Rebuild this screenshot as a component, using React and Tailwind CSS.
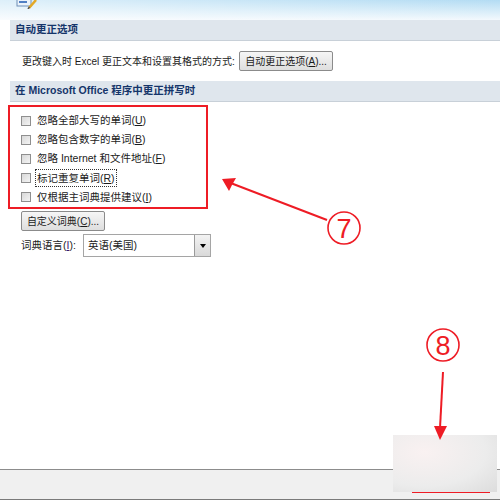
import { useState } from 'react'

const spellOptions = [
  { label: '忽略全部大写的单词', key: 'U' },
  { label: '忽略包含数字的单词', key: 'B' },
  { label: '忽略 Internet 和文件地址', key: 'F' },
  { label: '标记重复单词', key: 'R', focused: true },
  { label: '仅根据主词典提供建议', key: 'I' },
]

function Checkbox() {
  return (
    <span className="w-[10px] h-[10px] border border-[#8f8f8f] bg-[linear-gradient(135deg,#d8d8d8,#f4f4f4)] shrink-0" />
  )
}

function SectionHeader({ children }) {
  return (
    <div className="h-[21px] bg-[#dfe6ed] border-b border-[#c8d0d8] flex items-center pl-[5px] text-[10.5px] font-bold text-[#15356a] whitespace-nowrap">
      {children}
    </div>
  )
}

function WinButton({ children, className = '' }) {
  return (
    <button className={`h-[20px] border border-[#8b8b8b] rounded-[2px] bg-[linear-gradient(to_bottom,#f6f6f6,#dedede)] text-[10px] text-[#1b1b1b] flex items-center justify-center whitespace-nowrap shrink-0 ${className}`}>
      {children}
    </button>
  )
}

function Annotations() {
  return (
    <svg className="absolute inset-0 pointer-events-none" width="500" height="500">
      <line x1="327" y1="220" x2="228" y2="182" stroke="#ee1c25" strokeWidth="2" />
      <path d="M222,179 L236,178 L232,185 L229,191 Z" fill="#ee1c25" />
      <circle cx="344" cy="228" r="16" fill="none" stroke="#ee1c25" strokeWidth="1.6" />
      <text x="344" y="238" textAnchor="middle" fontSize="27" fill="#ee1c25" fontFamily="Liberation Sans, sans-serif">7</text>

      <circle cx="443" cy="345" r="16" fill="none" stroke="#ee1c25" strokeWidth="1.6" />
      <text x="443" y="355" textAnchor="middle" fontSize="27" fill="#ee1c25" fontFamily="Liberation Sans, sans-serif">8</text>
      <line x1="443" y1="372" x2="440" y2="428" stroke="#ee1c25" strokeWidth="2" />
      <path d="M434,426 L447,426 L440,440 Z" fill="#ee1c25" />
    </svg>
  )
}

export default function App() {
  const [lang] = useState('英语(美国)')

  return (
    <div className="w-[500px] h-[500px] relative overflow-hidden bg-white flex flex-col font-['Liberation_Sans','Noto_Sans_CJK_SC',sans-serif] text-[#1b1b1b]">
      <div className="h-[20px] relative bg-[linear-gradient(to_right,rgba(255,255,255,0.55),rgba(255,255,255,0)),linear-gradient(to_bottom,#b3dcf3,#f3f9fd)]">
        <svg className="absolute left-[16px] top-0" width="22" height="9" viewBox="0 0 22 9">
          <rect x="1" y="-4" width="14" height="10" fill="#eaf3fb" stroke="#6f8fb8" />
          <rect x="3" y="1" width="8" height="2" fill="#4f7fc4" />
          <path d="M13,8 L20,0" stroke="#e3a826" strokeWidth="2.5" />
          <path d="M12,9 L13.5,7" stroke="#555" strokeWidth="1.5" />
        </svg>
      </div>

      <div className="pl-[10px] flex flex-col">
        <SectionHeader>自动更正选项</SectionHeader>
        <div className="h-[40px] flex items-center pl-[12px] text-[10px]">
          <span className="w-[217px] whitespace-nowrap">更改键入时 Excel 更正文本和设置其格式的方式:</span>
          <WinButton className="w-[94px]">
            自动更正选项(<span className="underline">A</span>)...
          </WinButton>
        </div>
        <SectionHeader>在 Microsoft Office 程序中更正拼写时</SectionHeader>
      </div>

      <div className="ml-[8px] mt-[3px] w-[200px] h-[104px] border-2 border-[#ee1c25] flex flex-col pt-[4px]">
        {spellOptions.map((o) => (
          <div key={o.key} className="h-[19.5px] flex items-center pl-[11px] gap-[5px] text-[10.5px] whitespace-nowrap">
            <Checkbox />
            <span className={o.focused ? 'outline outline-1 outline-dotted outline-[#333] px-[1px] leading-[16px]' : 'px-[1px]'}>
              {o.label}(<span className="underline">{o.key}</span>)
            </span>
          </div>
        ))}
      </div>

      <div className="pl-[21px] mt-[2px] flex">
        <WinButton className="w-[84px]">
          自定义词典(<span className="underline">C</span>)...
        </WinButton>
      </div>

      <div className="pl-[21px] mt-[3px] flex items-center text-[10.5px] gap-[6px]">
        <span className="w-[56px] whitespace-nowrap">词典语言(<span className="underline text-[#3b1b70]">I</span>):</span>
        <div className="w-[128px] h-[23px] border border-[#a5a5a5] flex items-center bg-white">
          <span className="flex-1 pl-[4px] whitespace-nowrap">{lang}</span>
          <span className="w-[16px] h-full border-l border-[#9a9a9a] bg-[linear-gradient(to_bottom,#f3f3f3,#d9d9d9)] flex items-center justify-center">
            <span className="w-0 h-0 border-x-[3px] border-x-transparent border-t-[4px] border-t-black" />
          </span>
        </div>
      </div>

      <div className="mt-auto h-[31px] border-t border-[#8c8c8c] bg-[#f0f0f0] border-b border-b-[#7a7a7a]" />

      <div className="absolute left-[412px] top-[490px] w-[78px] h-[3px] bg-[#ee1c25]" />
      <div className="absolute left-[393px] top-[435px] w-[104px] h-[57px] bg-[radial-gradient(ellipse_at_30%_30%,#f9f1f1,#ececec_60%,#dcdcdc)]" />

      <Annotations />
    </div>
  )
}
